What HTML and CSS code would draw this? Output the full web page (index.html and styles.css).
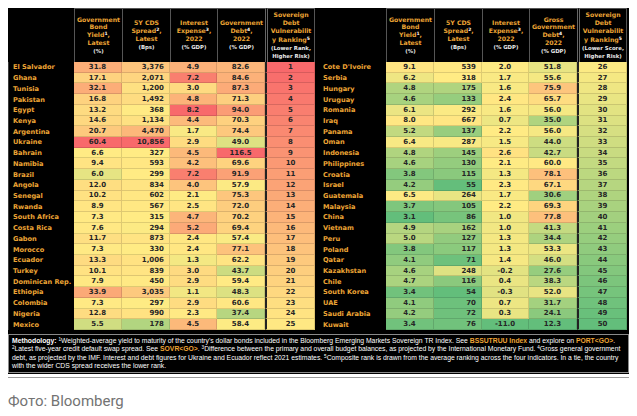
FILE: index.html
```html
<!DOCTYPE html>
<html lang="en">
<head>
<meta charset="utf-8">
<title>Sovereign Debt Vulnerability Ranking</title>
<link rel="stylesheet" href="styles.css">
</head>
<body>
<div class="panel">
  <div class="tables">
    <div class="tbl left">
      <div class="hn"></div>
      <div class="hd"><div class="ht">Government<br>Bond<br>Yield<sup>1</sup>,<br>Latest<br><span class="u">(%)</span></div></div>
      <div class="hd"><div class="ht">5Y CDS<br>Spread<sup>2</sup>,<br>Latest<br><span class="u">(Bps)</span></div></div>
      <div class="hd"><div class="ht">Interest<br>Expense<sup>3</sup>,<br>2022<br><span class="u">(% GDP)</span></div></div>
      <div class="hd"><div class="ht">Government<br>Debt<sup>4</sup>,<br>2022<br><span class="u">(% GDP)</span></div></div>
      <div class="hd rkh"><div class="ht">Sovereign<br>Debt<br>Vulnerabilit<br>y Ranking<sup>5</sup><br><span class="u">(Lower Rank,<br>Higher Risk)</span></div></div>

      <div class="nm">El Salvador</div><div class="d c1">31.8</div><div class="d c2">3,376</div><div class="d c3">4.9</div><div class="d c4">82.6</div><div class="d rk">1</div>
      <div class="nm">Ghana</div><div class="d c1">17.1</div><div class="d c2">2,071</div><div class="d c3">7.2</div><div class="d c4">84.6</div><div class="d rk">2</div>
      <div class="nm">Tunisia</div><div class="d c1">32.1</div><div class="d c2">1,200</div><div class="d c3">3.0</div><div class="d c4">87.3</div><div class="d rk">3</div>
      <div class="nm">Pakistan</div><div class="d c1">16.8</div><div class="d c2">1,492</div><div class="d c3">4.8</div><div class="d c4">71.3</div><div class="d rk">4</div>
      <div class="nm">Egypt</div><div class="d c1">13.2</div><div class="d c2">368</div><div class="d c3">8.2</div><div class="d c4">94.0</div><div class="d rk">5</div>
      <div class="nm">Kenya</div><div class="d c1">14.6</div><div class="d c2">1,134</div><div class="d c3">4.4</div><div class="d c4">70.3</div><div class="d rk">6</div>
      <div class="nm">Argentina</div><div class="d c1">20.7</div><div class="d c2">4,470</div><div class="d c3">1.7</div><div class="d c4">74.4</div><div class="d rk">7</div>
      <div class="nm">Ukraine</div><div class="d c1">60.4</div><div class="d c2">10,856</div><div class="d c3">2.9</div><div class="d c4">49.0</div><div class="d rk">8</div>
      <div class="nm">Bahrain</div><div class="d c1">6.6</div><div class="d c2">327</div><div class="d c3">4.5</div><div class="d c4">116.5</div><div class="d rk">9</div>
      <div class="nm">Namibia</div><div class="d c1">9.4</div><div class="d c2">593</div><div class="d c3">4.2</div><div class="d c4">69.6</div><div class="d rk">10</div>
      <div class="nm">Brazil</div><div class="d c1">6.0</div><div class="d c2">299</div><div class="d c3">7.2</div><div class="d c4">91.9</div><div class="d rk">11</div>
      <div class="nm">Angola</div><div class="d c1">12.0</div><div class="d c2">834</div><div class="d c3">4.0</div><div class="d c4">57.9</div><div class="d rk">12</div>
      <div class="nm">Senegal</div><div class="d c1">10.2</div><div class="d c2">602</div><div class="d c3">2.1</div><div class="d c4">75.3</div><div class="d rk">13</div>
      <div class="nm">Rwanda</div><div class="d c1">8.9</div><div class="d c2">567</div><div class="d c3">2.5</div><div class="d c4">72.0</div><div class="d rk">14</div>
      <div class="nm">South Africa</div><div class="d c1">7.3</div><div class="d c2">315</div><div class="d c3">4.7</div><div class="d c4">70.2</div><div class="d rk">15</div>
      <div class="nm">Costa Rica</div><div class="d c1">7.6</div><div class="d c2">294</div><div class="d c3">5.2</div><div class="d c4">69.4</div><div class="d rk">16</div>
      <div class="nm">Gabon</div><div class="d c1">11.7</div><div class="d c2">873</div><div class="d c3">2.4</div><div class="d c4">57.4</div><div class="d rk">17</div>
      <div class="nm">Morocco</div><div class="d c1">7.3</div><div class="d c2">330</div><div class="d c3">2.4</div><div class="d c4">77.1</div><div class="d rk">18</div>
      <div class="nm">Ecuador</div><div class="d c1">13.3</div><div class="d c2">1,006</div><div class="d c3">1.3</div><div class="d c4">62.2</div><div class="d rk">19</div>
      <div class="nm">Turkey</div><div class="d c1">10.1</div><div class="d c2">839</div><div class="d c3">3.0</div><div class="d c4">43.7</div><div class="d rk">20</div>
      <div class="nm">Dominican Rep.</div><div class="d c1">7.9</div><div class="d c2">450</div><div class="d c3">2.9</div><div class="d c4">59.4</div><div class="d rk">21</div>
      <div class="nm">Ethiopia</div><div class="d c1">33.9</div><div class="d c2">3,035</div><div class="d c3">1.1</div><div class="d c4">48.3</div><div class="d rk">22</div>
      <div class="nm">Colombia</div><div class="d c1">7.3</div><div class="d c2">297</div><div class="d c3">2.9</div><div class="d c4">60.6</div><div class="d rk">23</div>
      <div class="nm">Nigeria</div><div class="d c1">12.8</div><div class="d c2">990</div><div class="d c3">2.3</div><div class="d c4">37.4</div><div class="d rk">24</div>
      <div class="nm">Mexico</div><div class="d c1">5.5</div><div class="d c2">178</div><div class="d c3">4.5</div><div class="d c4">58.4</div><div class="d rk">25</div>
    </div>

    <div class="tbl right">
      <div class="hn"></div>
      <div class="hd"><div class="ht">Government<br>Bond<br>Yield<sup>1</sup>,<br>Latest<br><span class="u">(%)</span></div></div>
      <div class="hd"><div class="ht">5Y CDS<br>Spread<sup>2</sup>,<br>Latest<br><span class="u">(Bps)</span></div></div>
      <div class="hd"><div class="ht">Interest<br>Expense<sup>3</sup>,<br>2022<br><span class="u">(% GDP)</span></div></div>
      <div class="hd"><div class="ht">Gross<br>Government<br>Debt<sup>4</sup>,<br>2022<br><span class="u">(% GDP)</span></div></div>
      <div class="hd rkh"><div class="ht">Sovereign<br>Debt<br>Vulnerabilit<br>y Ranking<sup>5</sup><br><span class="u">(Lower Score,<br>Higher Risk)</span></div></div>

      <div class="nm">Cote D'Ivoire</div><div class="d c1">9.1</div><div class="d c2">539</div><div class="d c3">2.0</div><div class="d c4">51.8</div><div class="d rk">26</div>
      <div class="nm">Serbia</div><div class="d c1">6.2</div><div class="d c2">318</div><div class="d c3">1.7</div><div class="d c4">55.6</div><div class="d rk">27</div>
      <div class="nm">Hungary</div><div class="d c1">4.8</div><div class="d c2">175</div><div class="d c3">1.6</div><div class="d c4">75.9</div><div class="d rk">28</div>
      <div class="nm">Uruguay</div><div class="d c1">4.6</div><div class="d c2">133</div><div class="d c3">2.4</div><div class="d c4">65.7</div><div class="d rk">29</div>
      <div class="nm">Romania</div><div class="d c1">6.1</div><div class="d c2">292</div><div class="d c3">1.6</div><div class="d c4">56.0</div><div class="d rk">30</div>
      <div class="nm">Iraq</div><div class="d c1">8.0</div><div class="d c2">667</div><div class="d c3">0.7</div><div class="d c4">35.0</div><div class="d rk">31</div>
      <div class="nm">Panama</div><div class="d c1">5.2</div><div class="d c2">137</div><div class="d c3">2.2</div><div class="d c4">56.0</div><div class="d rk">32</div>
      <div class="nm">Oman</div><div class="d c1">6.4</div><div class="d c2">287</div><div class="d c3">1.5</div><div class="d c4">44.0</div><div class="d rk">33</div>
      <div class="nm">Indonesia</div><div class="d c1">4.8</div><div class="d c2">145</div><div class="d c3">2.6</div><div class="d c4">42.7</div><div class="d rk">34</div>
      <div class="nm">Philippines</div><div class="d c1">4.6</div><div class="d c2">130</div><div class="d c3">2.1</div><div class="d c4">60.0</div><div class="d rk">35</div>
      <div class="nm">Croatia</div><div class="d c1">3.8</div><div class="d c2">115</div><div class="d c3">1.3</div><div class="d c4">78.1</div><div class="d rk">36</div>
      <div class="nm">Israel</div><div class="d c1">4.2</div><div class="d c2">55</div><div class="d c3">2.3</div><div class="d c4">67.1</div><div class="d rk">37</div>
      <div class="nm">Guatemala</div><div class="d c1">6.5</div><div class="d c2">264</div><div class="d c3">1.7</div><div class="d c4">30.6</div><div class="d rk">38</div>
      <div class="nm">Malaysia</div><div class="d c1">3.7</div><div class="d c2">105</div><div class="d c3">2.2</div><div class="d c4">69.3</div><div class="d rk">39</div>
      <div class="nm">China</div><div class="d c1">3.1</div><div class="d c2">86</div><div class="d c3">1.0</div><div class="d c4">77.8</div><div class="d rk">40</div>
      <div class="nm">Vietnam</div><div class="d c1">4.9</div><div class="d c2">162</div><div class="d c3">1.0</div><div class="d c4">41.3</div><div class="d rk">41</div>
      <div class="nm">Peru</div><div class="d c1">5.0</div><div class="d c2">127</div><div class="d c3">1.3</div><div class="d c4">34.4</div><div class="d rk">42</div>
      <div class="nm">Poland</div><div class="d c1">3.8</div><div class="d c2">117</div><div class="d c3">1.3</div><div class="d c4">53.3</div><div class="d rk">43</div>
      <div class="nm">Qatar</div><div class="d c1">4.1</div><div class="d c2">71</div><div class="d c3">1.4</div><div class="d c4">46.0</div><div class="d rk">44</div>
      <div class="nm">Kazakhstan</div><div class="d c1">4.6</div><div class="d c2">248</div><div class="d c3">-0.2</div><div class="d c4">27.6</div><div class="d rk">45</div>
      <div class="nm">Chile</div><div class="d c1">4.7</div><div class="d c2">116</div><div class="d c3">0.4</div><div class="d c4">38.3</div><div class="d rk">46</div>
      <div class="nm">South Korea</div><div class="d c1">3.4</div><div class="d c2">54</div><div class="d c3">-0.3</div><div class="d c4">52.0</div><div class="d rk">47</div>
      <div class="nm">UAE</div><div class="d c1">4.1</div><div class="d c2">70</div><div class="d c3">0.7</div><div class="d c4">31.7</div><div class="d rk">48</div>
      <div class="nm">Saudi Arabia</div><div class="d c1">4.2</div><div class="d c2">72</div><div class="d c3">0.3</div><div class="d c4">24.1</div><div class="d rk">49</div>
      <div class="nm">Kuwait</div><div class="d c1">3.4</div><div class="d c2">76</div><div class="d c3">-11.0</div><div class="d c4">12.3</div><div class="d rk">50</div>
    </div>
  </div>

  <div class="method">
    <div class="ml"><b>Methodology:</b> <sup>1</sup>Weighted-average yield to maturity of the country's dollar bonds included in the Bloomberg Emerging Markets Sovereign TR Index. See <b class="g">BSSUTRUU Index</b> and explore on <b class="g">PORT&lt;GO&gt;</b>.</div>
    <div class="ml"><sup>2</sup>Latest five-year credit default swap spread. See <b class="g">SOVR&lt;GO&gt;</b>. <sup>3</sup>Difference between the primary and overall budget balances, as projected by the International Monetary Fund. <sup>4</sup>Gross general government</div>
    <div class="ml">debt, as projected by the IMF. Interest and debt figures for Ukraine and Ecuador reflect 2021 estimates. <sup>5</sup>Composite rank is drawn from the average ranking across the four indicators. In a tie, the country</div>
    <div class="ml">with the wider CDS spread receives the lower rank.</div>
  </div>
</div>
<div class="rule"></div>
<div class="caption">Фото: Bloomberg</div>
<script src="script.js"></script>
</body>
</html>
```

FILE: styles.css
```css
* { box-sizing: border-box; }

body {
  margin: 8px;
  background: #fff;
  font-family: "DejaVu Sans", Verdana, sans-serif;
}

.panel {
  width: 621px;
  background: #000;
  padding-bottom: 1px;
}

.tables {
  display: flex;
  gap: 2px;
}

.tbl {
  display: grid;
  grid-template-rows: 54px repeat(25, 10.72px);
}

.tbl.left {
  grid-template-columns: 66px 48px 48px 47px 48px 50px;
}

.tbl.right {
  grid-template-columns: 69px 48px 48px 47px 48px 50px;
}

.hn {
  background: #000;
}

.hd {
  display: flex;
  align-items: center;
  justify-content: center;
  color: #eda535;
  font-weight: bold;
  font-size: 6.2px;
  line-height: 7.8px;
  border-left: 1px solid #555;
  border-top: 1px solid #555;
}

.ht {
  text-align: center;
  white-space: nowrap;
}

.hd.rkh {
  border-left: 3px double #666;
  border-right: 1px solid #555;
  line-height: 8.2px;
}

.hd sup {
  font-size: 4.5px;
  line-height: 0;
  vertical-align: 2.5px;
  color: #fff;
}

.hd .u {
  color: #e8e8e8;
  font-size: 5.4px;
}

.nm {
  display: flex;
  align-items: center;
  padding-left: 4px;
  color: #eda535;
  font-weight: bold;
  font-size: 6.6px;
  white-space: nowrap;
  border-left: 1px solid #3a3a3a;
}

.right .nm {
  padding-left: 6px;
  border-left: none;
}

.d {
  display: flex;
  align-items: center;
  justify-content: center;
  font-weight: bold;
  font-size: 7px;
  color: #262626;
  background: #ffeb84;
  border-right: 1px solid rgba(0, 0, 0, 0.13);
  border-bottom: 1px solid rgba(0, 0, 0, 0.13);
}

.d.c2 {
  justify-content: flex-end;
  padding-right: 5px;
}

.d.rk {
  border-left: 2px solid #222;
}

.method {
  margin-top: 4px;
  border: 1px solid #8a8a8a;
  padding: 2px 3px 1px;
  color: #fff;
  font-family: "Liberation Sans", Arial, sans-serif;
  font-size: 6.8px;
  line-height: 8.5px;
}

.ml {
  white-space: nowrap;
}

.method sup {
  font-size: 4.6px;
  line-height: 0;
  vertical-align: 2px;
}

.method .g {
  color: #eda535;
}

.rule {
  width: 622px;
  height: 1px;
  margin-top: 3px;
  background: #9a9a9a;
}

.caption {
  margin-top: 14px;
  font-family: Roboto, "Noto Sans", sans-serif;
  font-size: 15px;
  line-height: 18px;
  color: #737373;
}
```

FILE: script.js
```js
(function () {
  var G = [99, 190, 123], Y = [255, 235, 132], R = [248, 105, 107];
  function mix(a, b, t) {
    t = Math.max(0, Math.min(1, t));
    return 'rgb(' + a.map(function (v, i) { return Math.round(v + (b[i] - v) * t); }).join(',') + ')';
  }
  ['c1', 'c2', 'c3', 'c4', 'rk'].forEach(function (k) {
    var els = [].slice.call(document.querySelectorAll('.d.' + k));
    var vals = els.map(function (e) { return parseFloat(e.textContent.replace(/,/g, '')); });
    var s = vals.slice().sort(function (a, b) { return a - b; });
    var n = s.length, min = s[0], max = s[n - 1];
    var pos = (n - 1) * 0.5, lo = Math.floor(pos), hi = Math.ceil(pos);
    var mid = s[lo] + (s[hi] - s[lo]) * (pos - lo);
    var lowC = k === 'rk' ? R : G, highC = k === 'rk' ? G : R;
    els.forEach(function (e, i) {
      var v = vals[i];
      var c = v <= mid ? mix(lowC, Y, (v - min) / (mid - min)) : mix(Y, highC, (v - mid) / (max - mid));
      e.style.backgroundColor = c;
    });
  });
})();
```
